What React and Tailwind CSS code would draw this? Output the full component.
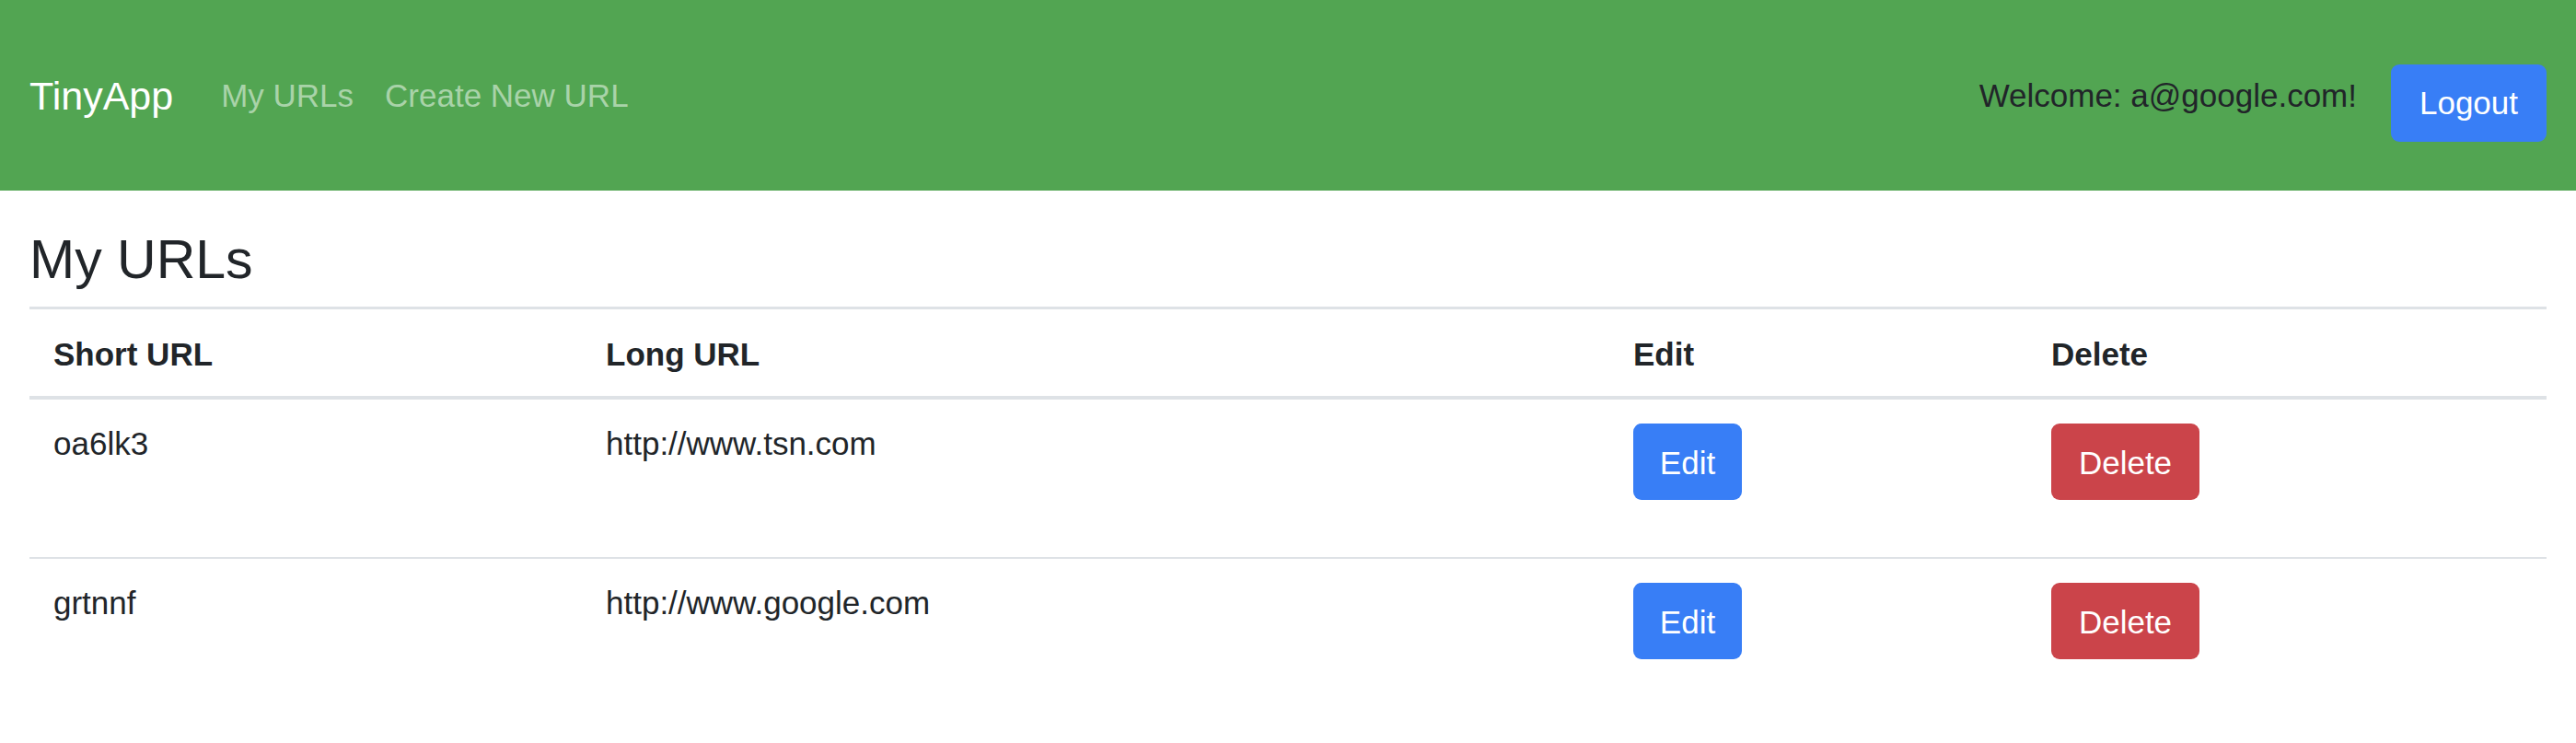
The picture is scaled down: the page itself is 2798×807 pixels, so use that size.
import React from "react";

const rows = [
  { short: "oa6lk3", long: "http://www.tsn.com" },
  { short: "grtnnf", long: "http://www.google.com" },
];

const cols = ["w-[600px]", "w-[1116px]", "w-[454px]", "w-[564px]"];

export default function App() {
  return (
    <div className="min-h-[807px] bg-white font-['Liberation_Sans',Arial,sans-serif] text-[#212529]">
      <nav className="flex h-[207px] items-center bg-[#52a552] px-[32px]">
        <a className="text-[43px] leading-[52px] text-white">TinyApp</a>
        <a className="ml-[52px] text-[35px] leading-[52px] text-[#a9d3a9]">My URLs</a>
        <a className="ml-[34px] text-[35px] leading-[52px] text-[#a9d3a9]">Create New URL</a>
        <div className="ml-auto flex items-center">
          <span className="mr-[37px] text-[35px] leading-[52px] text-[#212529]">Welcome: a@google.com!</span>
          <div className="pt-[17px]">
            <button className="flex h-[84px] w-[169px] items-center justify-center rounded-[9px] bg-[#387ef6] text-[35px] leading-[52px] text-white">
              Logout
            </button>
          </div>
        </div>
      </nav>
      <main className="px-[32px]">
        <h1 className="mt-[40px] mb-[15px] text-[59px] leading-[71px] font-normal">My URLs</h1>
        <div className="border-t-[3px] border-[#dee2e6]">
          <div className="flex border-b-[4px] border-[#dee2e6] pt-[23px] pb-[19px] text-[35px] font-bold leading-[52px]">
            <div className={`${cols[0]} pl-[26px]`}>Short URL</div>
            <div className={`${cols[1]} pl-[26px]`}>Long URL</div>
            <div className={`${cols[2]} pl-[26px]`}>Edit</div>
            <div className={`${cols[3]} pl-[26px]`}>Delete</div>
          </div>
          {rows.map((r, i) => (
            <div
              key={r.short}
              className={`flex h-[171px] text-[35px] leading-[52px] ${i < rows.length - 1 ? "border-b-[2px] border-[#dee2e6] h-[173px]" : ""}`}
            >
              <div className={`${cols[0]} pl-[26px] pt-[22px]`}>{r.short}</div>
              <div className={`${cols[1]} pl-[26px] pt-[22px]`}>{r.long}</div>
              <div className={`${cols[2]} pl-[26px] pt-[26px]`}>
                <button className="flex h-[83px] w-[118px] items-center justify-center rounded-[9px] bg-[#387ef6] pt-[2px] text-white">
                  Edit
                </button>
              </div>
              <div className={`${cols[3]} pl-[26px] pt-[26px]`}>
                <button className="flex h-[83px] w-[161px] items-center justify-center rounded-[9px] bg-[#cb444a] pt-[2px] text-white">
                  Delete
                </button>
              </div>
            </div>
          ))}
        </div>
      </main>
    </div>
  );
}
